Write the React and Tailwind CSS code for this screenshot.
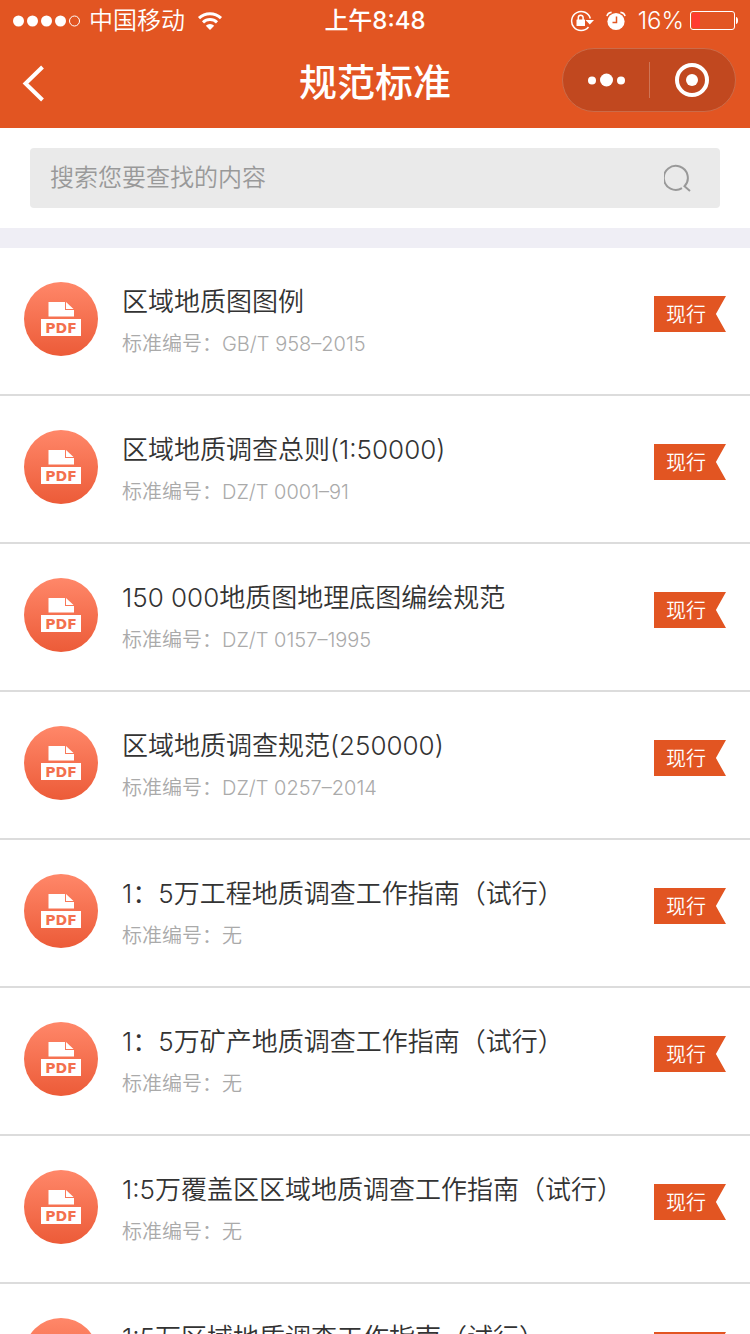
import { useState } from 'react';

const standards = [
    { title: '区域地质图图例', code: 'GB/T 958–2015' },
    { title: '区域地质调查总则(1:50000)', code: 'DZ/T 0001–91' },
    { title: '150 000地质图地理底图编绘规范', code: 'DZ/T 0157–1995' },
    { title: '区域地质调查规范(250000)', code: 'DZ/T 0257–2014' },
    { title: '1：5万工程地质调查工作指南（试行）', code: '无' },
    { title: '1：5万矿产地质调查工作指南（试行）', code: '无' },
    { title: '1:5万覆盖区区域地质调查工作指南（试行）', code: '无' },
    { title: '1:5万区域地质调查工作指南（试行）', code: '无' },
];

function StatusBar() {
    return (
        <div className="grid h-10 grid-cols-[1fr_auto_1fr] items-center px-3 text-2xl leading-10">
            <div className="flex items-center">
                <svg width="69" height="12" viewBox="-1 0 69 12" fill="#fff">
                    <circle cx="5.5" cy="6" r="5.5" />
                    <circle cx="19.5" cy="6" r="5.5" />
                    <circle cx="33.5" cy="6" r="5.5" />
                    <circle cx="47.5" cy="6" r="5.5" />
                    <circle cx="61.5" cy="6" r="5" fill="none" stroke="#fff" />
                </svg>
                <span className="ml-2 font-[350]">中国移动</span>
                <svg className="ml-3" width="26" height="20" viewBox="0 0 26 20" fill="none" stroke="#fff" strokeWidth="3">
                    <path d="M2 7.2a16 16 0 0 1 22 0" />
                    <path d="M6 11.4a10.2 10.2 0 0 1 14 0" />
                    <path d="M13 19l-4.2-4.3a6 6 0 0 1 8.4 0z" fill="#fff" stroke="none" />
                </svg>
            </div>
            <span className="pt-px font-medium">上午8:48</span>
            <div className="flex items-center justify-end">
                {/* Rotation lock */}
                <svg width="24" height="22" viewBox="0 0 24 22" fill="none" stroke="#fff" strokeWidth="1.5">
                    <path d="M20.3 8.5A9.5 9.5 0 1 0 18.5 17" />
                    <path d="M15.5 10H24l-4.2 4.5z" fill="#fff" stroke="none" />
                    <rect x="6.5" y="9.5" width="8.5" height="6.5" rx="0.5" fill="#fff" stroke="none" />
                    <path d="M8.3 10V7.6a2.400 2.400 0 0 1 4.800 0V10" />
                </svg>
                {/* Alarm */}
                <svg className="ml-3" width="20" height="20" viewBox="0 0 20 20" fill="none">
                    <circle cx="10" cy="10.5" r="8.6" fill="#fff" />
                    <path d="M10.5 5.5v6H6.5" stroke="#E25522" strokeWidth="1.5" />
                    <path d="M1 5.2C1.4 3 3 1.6 5.6 1.4M19 5.2C18.6 3 17 1.6 14.4 1.4" stroke="#fff" strokeWidth="1.6" />
                </svg>
                <span className="ml-3 pt-px font-light">16%</span>
                <svg className="ml-1.5" width="48" height="20" viewBox="0 0 48 20" fill="none">
                    <rect x="0.5" y="0.5" width="44" height="18" rx="2.5" stroke="#fff" />
                    <rect x="2" y="2" width="8" height="15" rx="1" fill="#FF3B30" />
                    <path d="M46 6c1.2 0 2 1.5 2 3.5s-.8 3.5-2 3.5z" fill="#fff" />
                </svg>
            </div>
        </div>
    );
}

function NavBar() {
    return (
        <div className="grid h-[88px] grid-cols-[1fr_auto_1fr] items-start px-3.5">
            <button type="button" aria-label="返回" className="mt-6 ml-1.5 w-7">
                <svg width="26" height="38" viewBox="0 0 26 38" fill="none" stroke="#fff" strokeWidth="4">
                    <path d="M22.5 3L5.5 19.5l17 16.5" />
                </svg>
            </button>
            <h1 className="mt-[18px] text-[38px] leading-[48px] font-medium">规范标准</h1>
            <div className="mt-2 flex h-16 w-[174px] items-center justify-self-end rounded-full border border-[#CB6B49] bg-[#C1481F]">
                <button type="button" aria-label="更多" className="flex flex-1 items-center justify-center">
                    <svg width="40" height="14" viewBox="0 0 40 14" fill="#fff">
                        <circle cx="6" cy="7.5" r="4" />
                        <circle cx="20.5" cy="7" r="6.5" />
                        <circle cx="35" cy="7.5" r="4" />
                    </svg>
                </button>
                <span className="h-9 w-px bg-[#CF7556]" />
                <button type="button" aria-label="关闭" className="flex flex-1 items-center justify-center">
                    <svg width="34" height="34" viewBox="0 0 34 34" fill="#fff">
                        <circle cx="17" cy="17" r="15" fill="none" stroke="#fff" strokeWidth="4" />
                        <circle cx="17" cy="17" r="6" />
                    </svg>
                </button>
            </div>
        </div>
    );
}

function PdfIcon() {
    return (
        <svg className="shrink-0" width="74" height="74" viewBox="0 0 74 74">
            <defs>
                <linearGradient id="pdfFill" x1="0" y1="0" x2="0" y2="1">
                    <stop offset="0" stopColor="#FF8769" />
                    <stop offset="1" stopColor="#EC5B38" />
                </linearGradient>
            </defs>
            <circle cx="37" cy="37" r="37" fill="url(#pdfFill)" />
            <path d="M24.5 20H41v8h9v6.5H24.5z" fill="#fff" />
            <path d="M42 20l7.5 7H42z" fill="#fff" />
            <rect x="17" y="37" width="40" height="17" fill="#fff" />
            <text x="37" y="50.5" textAnchor="middle" fontFamily="DejaVu Sans, sans-serif" fontSize="14" fontWeight="700" fill="#F3704E">PDF</text>
        </svg>
    );
}

function StandardItem({ title, code }) {
    return (
        <li className="flex h-[148px] items-start border-b-2 border-[#DCDCDC] px-6 pt-[34px]">
            <PdfIcon />
            <div className="ml-6 min-w-0 flex-1">
                <h2 className="truncate text-[26px] leading-10 font-[350] text-[#333]">{title}</h2>
                <p className="mt-1 text-xl leading-9 font-[350] text-[#AAA]">标准编号：{code}</p>
            </div>
            <span className="mt-3.5 h-9 w-[72px] shrink-0 bg-[#E25522] pt-px pl-3 text-xl leading-9 font-[350] text-white [clip-path:polygon(0_0,100%_0,86%_50%,100%_100%,0_100%)]">
                现行
            </span>
        </li>
    );
}

export default function App() {
    const [keyword, setKeyword] = useState('');

    const list = standards.filter((item) => item.title.includes(keyword));

    return (
        <div className="flex h-screen flex-col bg-white font-['Inter','Noto_Sans_CJK_SC',sans-serif]">
            <header className="shrink-0 bg-[#E25522] text-white">
                <StatusBar />
                <NavBar />
            </header>

            {/* Search */}
            <div className="shrink-0 border-b-[20px] border-[#EFEEF5] px-[30px] py-5">
                <label className="flex h-[60px] items-center rounded bg-[#EAEAEA] pr-7 pl-5">
                    <input
                        type="text"
                        aria-label="搜索"
                        value={keyword}
                        onChange={(e) => setKeyword(e.target.value)}
                        placeholder="搜索您要查找的内容"
                        className="min-w-0 flex-1 bg-transparent text-2xl font-[350] text-[#333] outline-none placeholder:text-[#999]"
                    />
                    <svg width="28" height="28" viewBox="0 0 28 28" fill="none" stroke="#999" strokeWidth="2">
                        <path d="M18 24.2A12 12 0 1 1 20.500 22.200L26 27" />
                    </svg>
                </label>
            </div>

            <ul className="min-h-0 flex-1 overflow-y-auto [scrollbar-width:none]">
                {list.map((item) => (
                    <StandardItem key={item.title} title={item.title} code={item.code} />
                ))}
            </ul>
        </div>
    );
}
